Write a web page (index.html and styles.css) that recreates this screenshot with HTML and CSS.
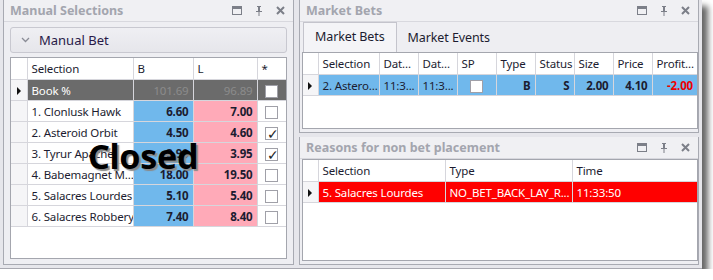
FILE: index.html
```html
<!DOCTYPE html>
<html>
<head>
    <title>Manual Selections</title>
    <link rel="stylesheet" href="styles.css">
</head>
<body>
<div class="window">

    <div class="panel left">
        <div class="titlebar">
            <span class="title">Manual Selections</span>
            <span class="tools">
                <svg width="10" height="9" viewBox="0 0 10 9"><rect x="0.5" y="0.5" width="9" height="8" fill="none" stroke="#7c7f88"/><rect x="0" y="0" width="10" height="3" fill="#7c7f88"/></svg>
                <svg width="8" height="10" viewBox="0 0 8 10"><path d="M2 0h4v1H5v4h2v1H1V5h2V1H2z M3.5 6h1v4h-1z" fill="#7c7f88"/></svg>
                <svg width="9" height="9" viewBox="0 0 9 9"><path d="M1 1l7 7M8 1l-7 7" stroke="#7c7f88" stroke-width="2"/></svg>
            </span>
        </div>
        <div class="body">
            <div class="group">
                <span class="chev"><svg width="9" height="6" viewBox="0 0 9 6"><path d="M1 1l3.5 3.5L8 1" fill="none" stroke="#8a8c96" stroke-width="1.3"/></svg></span>
                <span>Manual Bet</span>
            </div>
            <div class="grid-wrap">
                <table class="grid sel">
                    <colgroup><col style="width:16px"><col style="width:106px"><col style="width:60px"><col style="width:64px"><col></colgroup>
                    <tr class="head"><th></th><th>Selection</th><th>B</th><th>L</th><th>*</th></tr>
                    <tr class="book"><td class="ind"><span class="arrow"></span></td><td>Book %</td><td class="num">101.69</td><td class="num">96.89</td><td class="chk"><span class="box"></span></td></tr>
                    <tr><td class="ind"></td><td>1. Clonlusk Hawk</td><td class="back">6.60</td><td class="lay">7.00</td><td class="chk"><span class="box"></span></td></tr>
                    <tr><td class="ind"></td><td>2. Asteroid Orbit</td><td class="back">4.50</td><td class="lay">4.60</td><td class="chk"><span class="box on">&#10003;</span></td></tr>
                    <tr><td class="ind"></td><td>3. Tyrur Apache</td><td class="back">3.90</td><td class="lay">3.95</td><td class="chk"><span class="box on">&#10003;</span></td></tr>
                    <tr><td class="ind"></td><td>4. Babemagnet M...</td><td class="back">18.00</td><td class="lay">19.50</td><td class="chk"><span class="box"></span></td></tr>
                    <tr><td class="ind"></td><td>5. Salacres Lourdes</td><td class="back">5.10</td><td class="lay">5.40</td><td class="chk"><span class="box"></span></td></tr>
                    <tr><td class="ind"></td><td>6. Salacres Robbery</td><td class="back">7.40</td><td class="lay">8.40</td><td class="chk"><span class="box"></span></td></tr>
                </table>
                <div class="closed">Closed</div>
            </div>
        </div>
    </div>

    <div class="right">
        <div class="panel bets">
            <div class="titlebar">
                <span class="title">Market Bets</span>
                <span class="tools">
                    <svg width="10" height="9" viewBox="0 0 10 9"><rect x="0.5" y="0.5" width="9" height="8" fill="none" stroke="#7c7f88"/><rect x="0" y="0" width="10" height="3" fill="#7c7f88"/></svg>
                    <svg width="8" height="10" viewBox="0 0 8 10"><path d="M2 0h4v1H5v4h2v1H1V5h2V1H2z M3.5 6h1v4h-1z" fill="#7c7f88"/></svg>
                    <svg width="9" height="9" viewBox="0 0 9 9"><path d="M1 1l7 7M8 1l-7 7" stroke="#7c7f88" stroke-width="2"/></svg>
                </span>
            </div>
            <div class="body">
                <div class="tabs">
                    <span class="tab active">Market Bets</span>
                    <span class="tab">Market Events</span>
                </div>
                <div class="grid-wrap fill">
                    <table class="grid">
                        <colgroup><col style="width:15px"><col style="width:61px"><col style="width:39px"><col style="width:39px"><col style="width:39px"><col style="width:39px"><col style="width:39px"><col style="width:39px"><col style="width:39px"><col></colgroup>
                        <tr class="head"><th></th><th>Selection</th><th>Dat...</th><th>Dat...</th><th>SP</th><th>Type</th><th>Status</th><th>Size</th><th>Price</th><th>Profit...</th></tr>
                        <tr class="bet"><td class="ind"><span class="arrow"></span></td><td>2. Astero...</td><td>11:3...</td><td>11:3...</td><td class="mid"><span class="box"></span></td><td class="num">B</td><td class="num">S</td><td class="num">2.00</td><td class="num">4.10</td><td class="num loss">-2.00</td></tr>
                    </table>
                </div>
            </div>
        </div>

        <div class="panel reasons">
            <div class="titlebar">
                <span class="title">Reasons for non bet placement</span>
                <span class="tools">
                    <svg width="10" height="9" viewBox="0 0 10 9"><rect x="0.5" y="0.5" width="9" height="8" fill="none" stroke="#7c7f88"/><rect x="0" y="0" width="10" height="3" fill="#7c7f88"/></svg>
                    <svg width="8" height="10" viewBox="0 0 8 10"><path d="M2 0h4v1H5v4h2v1H1V5h2V1H2z M3.5 6h1v4h-1z" fill="#7c7f88"/></svg>
                    <svg width="9" height="9" viewBox="0 0 9 9"><path d="M1 1l7 7M8 1l-7 7" stroke="#7c7f88" stroke-width="2"/></svg>
                </span>
            </div>
            <div class="body">
                <div class="grid-wrap fill">
                    <table class="grid">
                        <colgroup><col style="width:15px"><col style="width:127px"><col style="width:127px"><col></colgroup>
                        <tr class="head"><th></th><th>Selection</th><th>Type</th><th>Time</th></tr>
                        <tr class="reject"><td class="ind"><span class="arrow"></span></td><td>5. Salacres Lourdes</td><td>NO_BET_BACK_LAY_R...</td><td>11:33:50</td></tr>
                    </table>
                </div>
            </div>
        </div>
    </div>

</div>
</body>
</html>
```

FILE: styles.css
```css
body {
    margin: 0;
    background: #fff;
    font-family: "Noto Sans", "Open Sans", sans-serif;
    font-size: 11.5px;
    letter-spacing: -0.15px;
    color: #1c1c30;
}

.window {
    width: 696px;
    height: 265px;
    padding: 0 3px 3px 3px;
    background: #e6e6eb;
    display: flex;
    gap: 5px;
    box-shadow: 6px 6px 6px rgba(0,0,0,0.6);
    border-bottom: 1px solid #a8a8b0;
}

.panel {
    background: #eeeef2;
    border: 1px solid #a8aab2;
    border-top: none;
    display: flex;
    flex-direction: column;
}

.left {
    width: 289px;
}

.right {
    flex: 1;
    display: flex;
    flex-direction: column;
    gap: 4px;
}

.bets {
    height: 132px;
}

.reasons {
    flex: 1;
}

.titlebar {
    height: 21px;
    border-bottom: 1px solid #d8d8de;
    background: #f0f0f3;
    display: flex;
    align-items: center;
    padding: 0 8px 0 6px;
}

.title {
    flex: 1;
    font-weight: bold;
    font-size: 12.5px;
    letter-spacing: 0;
    color: #a3a5ae;
}

.tools {
    display: flex;
    align-items: center;
    gap: 13px;
}

.tools svg {
    display: block;
}

.body {
    flex: 1;
    display: flex;
    flex-direction: column;
    padding: 5px 6px 5px 6px;
}

.bets .body, .reasons .body {
    padding: 0 0 3px 2px;
}

.group {
    height: 24px;
    border: 1px solid #c8c8d0;
    border-radius: 3px;
    background: linear-gradient(#efeff3, #e6e6eb);
    display: flex;
    align-items: center;
    font-size: 13px;
    letter-spacing: 0;
    color: #281a48;
    margin-bottom: 4px;
}

.chev {
    width: 28px;
    display: flex;
    justify-content: center;
}

.chev svg {
    display: block;
}

.grid-wrap {
    flex: 1;
    position: relative;
    background: #fff;
    border: 1px solid #a4a6ae;
}

.grid {
    width: 100%;
    border-collapse: collapse;
    table-layout: fixed;
}

.grid th, .grid td {
    border: 1px solid #d6d6dc;
    padding: 0 4px;
    white-space: nowrap;
    overflow: hidden;
    text-align: left;
    font-weight: normal;
}

.grid tr:first-child th {
    border-top: none;
}

.grid th:first-child, .grid td:first-child {
    border-left: none;
}

.grid th:last-child, .grid td:last-child {
    border-right: none;
}

.grid th {
    height: 21px;
    color: #1c1c30;
}

.grid td {
    height: 20px;
}

.grid .ind {
    background: #f5f5f7;
    padding: 0;
    text-align: center;
}

.arrow {
    display: inline-block;
    border-left: 4px solid #111;
    border-top: 4px solid transparent;
    border-bottom: 4px solid transparent;
    vertical-align: middle;
}

.num, .back, .lay {
    text-align: right !important;
}

.back, .lay {
    font-weight: bold !important;
}

.back {
    background: #70b8ec;
}

.lay {
    background: #ffaab8;
}

.book td {
    background: #6b6b6b;
    color: #fff;
}

.book .num {
    color: #8c8c8c;
}

.book .ind {
    background: #f5f5f7;
}

.chk, .mid {
    text-align: center !important;
}

.box {
    display: inline-block;
    width: 11px;
    height: 11px;
    border: 1px solid #a0a0a8;
    background: #fff;
    vertical-align: middle;
    line-height: 11px;
    font-size: 14px;
    color: #222;
    text-indent: 1px;
}

.bet td {
    background: #70b8ec;
}

.bet .num {
    font-weight: bold;
}

.bet .loss {
    color: #ee0000;
}

.reject td {
    background: #ff0000;
    color: #fff;
}

.tabs {
    display: flex;
    height: 30px;
    align-items: flex-end;
    padding-left: 1px;
}

.tab {
    height: 28px;
    line-height: 28px;
    padding: 0 11px;
    font-size: 12.5px;
    letter-spacing: -0.1px;
    color: #1c1c30;
}

.tab.active {
    background: #f4f4f7;
    border: 1px solid #c4c4cc;
    border-bottom: none;
    height: 29px;
}

.closed {
    position: absolute;
    left: 77px;
    top: 75px;
    font-size: 34px;
    font-weight: bold;
    letter-spacing: -0.3px;
    color: #000;
    text-shadow: 2px 2px 1px #8a8a8a;
}
```
